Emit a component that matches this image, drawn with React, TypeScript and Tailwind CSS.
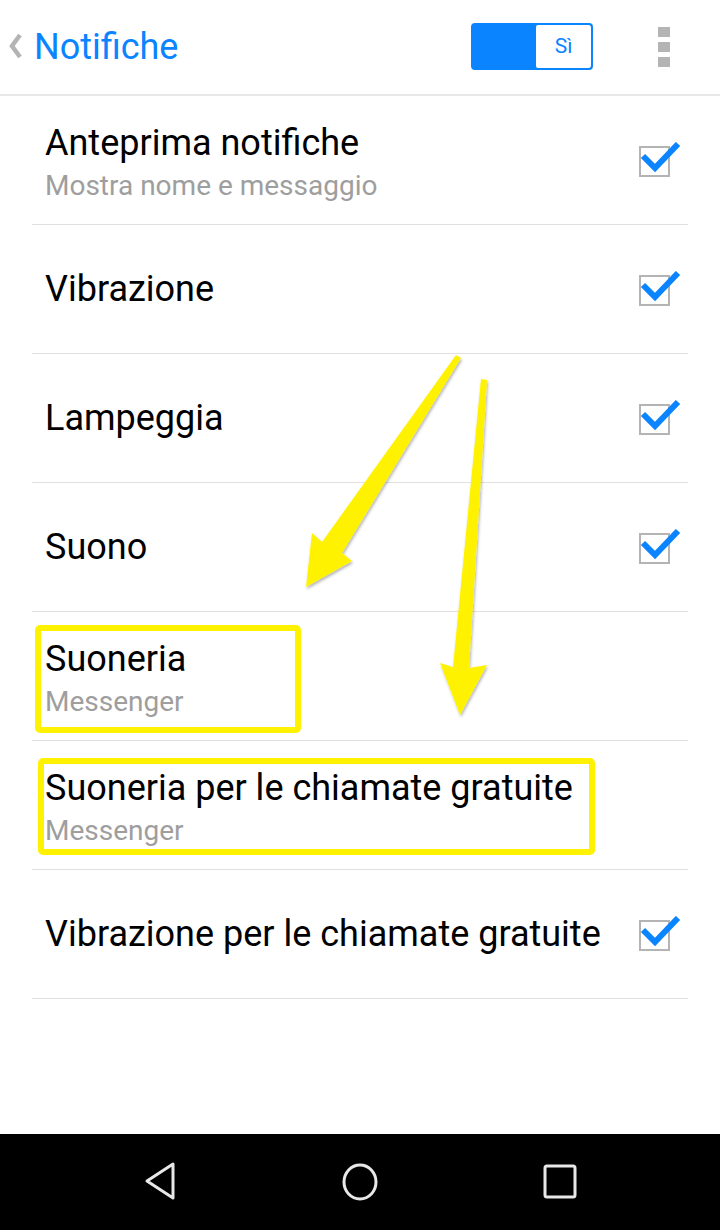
import React from 'react';

const font = { fontFamily: 'Roboto, "Noto Sans", sans-serif' };

const CheckBox: React.FC = () => (
  <div className="relative w-[44px] h-[36px] shrink-0">
    <div className="absolute left-[1px] top-[4px] w-[31px] h-[31px] border-2 border-[#b4b4b4]" />
    <svg className="absolute left-0 top-0" width="44" height="36" viewBox="0 0 44 36">
      <path d="M5 14 L17 26 L40 2" fill="none" stroke="#0a84ff" strokeWidth="6" strokeLinejoin="miter" />
    </svg>
  </div>
);

type Row = { title: string; sub?: string; check?: boolean };

const rows: Row[] = [
  { title: 'Anteprima notifiche', sub: 'Mostra nome e messaggio', check: true },
  { title: 'Vibrazione', check: true },
  { title: 'Lampeggia', check: true },
  { title: 'Suono', check: true },
  { title: 'Suoneria', sub: 'Messenger' },
  { title: 'Suoneria per le chiamate gratuite', sub: 'Messenger' },
  { title: 'Vibrazione per le chiamate gratuite', check: true },
];

export default function App() {
  return (
    <div className="relative w-[720px] h-[1230px] bg-white flex flex-col overflow-hidden" style={font}>
      {/* header */}
      <div className="h-[96px] flex items-center border-b-2 border-[#e8e8e8] shrink-0">
        <svg className="ml-[8px] -mt-[2px]" width="14" height="26" viewBox="0 0 14 26">
          <path d="M12 2 L4 13 L12 24" fill="none" stroke="#b4b4b4" strokeWidth="4.5" />
        </svg>
        <span className="ml-[12px] text-[#0a84ff] text-[36px] leading-none">Notifiche</span>
        <div className="ml-auto -mt-[1px] flex h-[47px] w-[122px] rounded-[4px] border-2 border-[#0a84ff] bg-[#0a84ff] overflow-hidden">
          <div className="w-[63px]" />
          <div className="flex-1 bg-white rounded-[2px] flex items-center justify-center text-[#0a84ff] text-[21px]">Sì</div>
        </div>
        <div className="ml-[65px] mr-[50px] flex flex-col gap-[5px]">
          <div className="w-[12px] h-[10px] bg-[#b4b4b4]" />
          <div className="w-[12px] h-[10px] bg-[#b4b4b4]" />
          <div className="w-[12px] h-[10px] bg-[#b4b4b4]" />
        </div>
      </div>

      {/* list */}
      <div className="px-[32px] flex flex-col">
        {rows.map((r) => (
          <div key={r.title} className="h-[129px] flex items-center border-b border-[#e0e0e0] pl-[13px] pr-[6px]">
            <div className={r.sub ? 'flex-1 flex flex-col pt-[5px]' : 'flex-1 flex flex-col'}>
              <span className="text-black text-[36px] leading-[42px]">{r.title}</span>
              {r.sub && <span className="mt-[5px] text-[#9e9e9e] text-[28px] leading-[34px]">{r.sub}</span>}
            </div>
            {r.check && <CheckBox />}
          </div>
        ))}
      </div>

      <div className="flex-1" />

      {/* nav bar */}
      <div className="h-[96px] bg-black flex items-center justify-center gap-[160px] shrink-0">
        <svg width="40" height="44" viewBox="0 0 40 44">
          <path d="M33 4 L33 38 L7 21 Z" fill="none" stroke="#e8e8e8" strokeWidth="3" strokeLinejoin="round" />
        </svg>
        <svg width="40" height="44" viewBox="0 0 40 44">
          <ellipse cx="20" cy="22" rx="16" ry="17" fill="none" stroke="#e8e8e8" strokeWidth="3" />
        </svg>
        <svg width="40" height="44" viewBox="0 0 40 44">
          <rect x="5" y="6" width="30" height="31" rx="2" fill="none" stroke="#e8e8e8" strokeWidth="3" />
        </svg>
      </div>

      {/* annotations */}
      <svg className="absolute inset-0 pointer-events-none" width="720" height="1230" viewBox="0 0 720 1230">
        <defs>
          <filter id="sh" x="-20%" y="-20%" width="140%" height="140%">
            <feDropShadow dx="1" dy="2" stdDeviation="1.5" floodColor="#000" floodOpacity="0.3" />
          </filter>
        </defs>
        <g fill="#fff200" filter="url(#sh)">
          <path d="M456 355 L461 358 L342 553 L352 561 L306 587 L312 533 L322 542 Z" />
          <path d="M481 379 L487 380 L469 668 L487 665 L460 715 L440 663 L453 667 Z" />
        </g>
        <g fill="none" stroke="#fff200" strokeWidth="6">
          <rect x="38" y="628" width="260" height="102" rx="2" />
          <rect x="41" y="761" width="551" height="91" rx="2" />
        </g>
      </svg>
    </div>
  );
}
